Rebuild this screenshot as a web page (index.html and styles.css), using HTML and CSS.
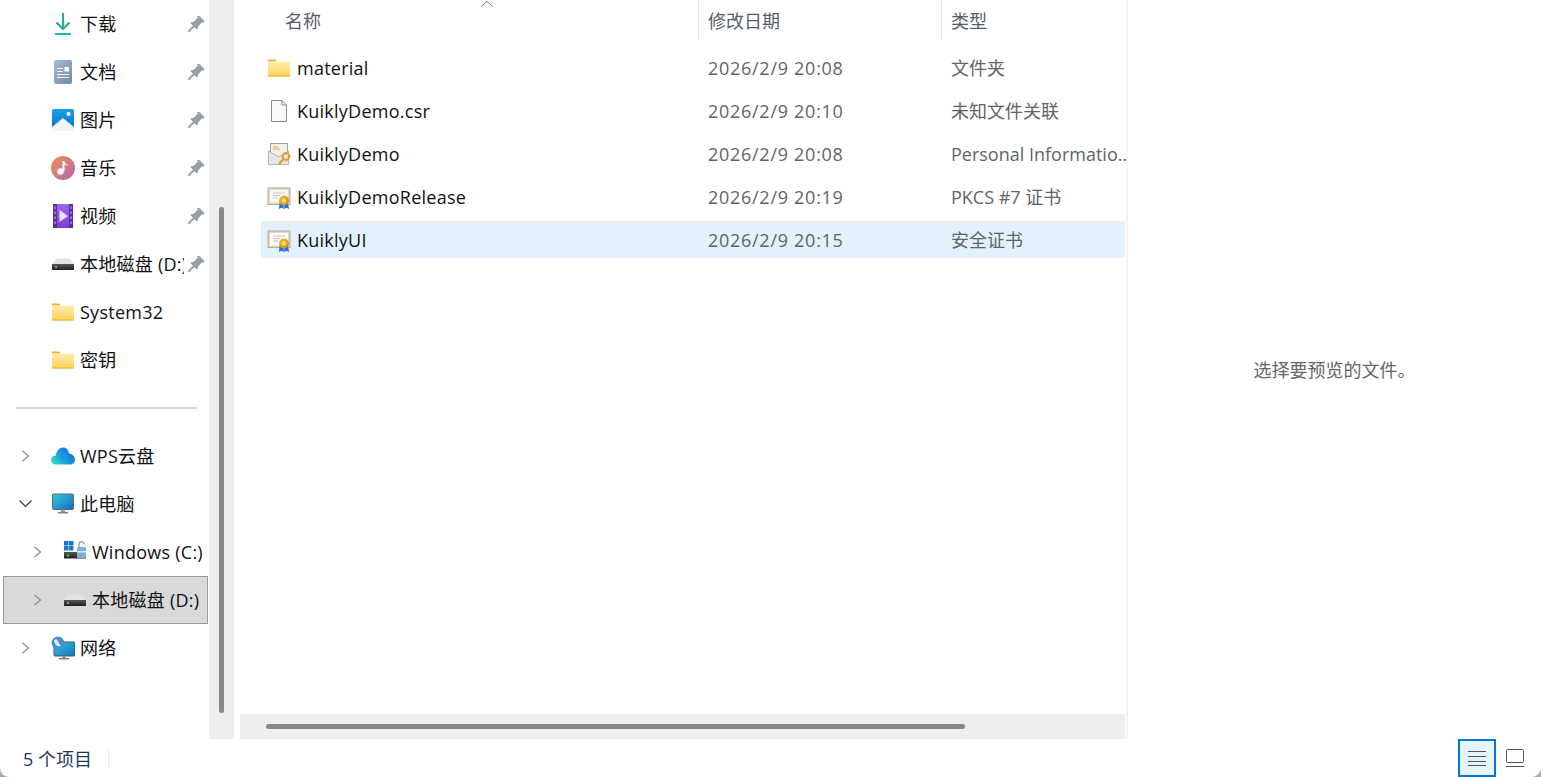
FILE: index.html
```html
<!DOCTYPE html>
<html lang="zh-CN">
<head>
<meta charset="utf-8">
<title>文件资源管理器</title>
<link rel="stylesheet" href="styles.css">
</head>
<body>
<svg class="defs" width="0" height="0" aria-hidden="true">
  <defs>
    <linearGradient id="fold" x1="0" y1="0" x2="0" y2="1"><stop offset="0" stop-color="#ffeeb0"/><stop offset="1" stop-color="#ffd055"/></linearGradient>
    <linearGradient id="doc" x1="0" y1="0" x2="1" y2="1"><stop offset="0" stop-color="#a9bdd4"/><stop offset="1" stop-color="#6f8aa8"/></linearGradient>
    <linearGradient id="pic" x1="0" y1="0" x2="0" y2="1"><stop offset="0" stop-color="#19a0e8"/><stop offset="1" stop-color="#0a6cc0"/></linearGradient>
    <linearGradient id="mus" x1="0" y1="0" x2="1" y2="1"><stop offset="0" stop-color="#f09050"/><stop offset="1" stop-color="#b068b0"/></linearGradient>
    <linearGradient id="vid" x1="0" y1="0" x2="0" y2="1"><stop offset="0" stop-color="#9a68e8"/><stop offset="1" stop-color="#7a40d0"/></linearGradient>
    <linearGradient id="cloud" x1="0" y1="1" x2="1" y2="0.4"><stop offset="0" stop-color="#3ce8c0"/><stop offset=".45" stop-color="#1ca8e0"/><stop offset="1" stop-color="#0f6cd8"/></linearGradient>
    <linearGradient id="scr" x1="0" y1="0" x2="1" y2="1"><stop offset="0" stop-color="#38c8e0"/><stop offset="1" stop-color="#1070c0"/></linearGradient>
    <linearGradient id="drv" x1="0" y1="0" x2="0" y2="1"><stop offset="0" stop-color="#555"/><stop offset="1" stop-color="#222"/></linearGradient>
    <linearGradient id="seal" x1="0" y1="0" x2="1" y2="1"><stop offset="0" stop-color="#f4c030"/><stop offset="1" stop-color="#c88a10"/></linearGradient>
    <symbol id="i-folder" viewBox="0 0 22 22">
      <path d="M0 3.500C0 3 .4 2.500 1 2.500H7L9 4.500H0Z" fill="#f2b021"/>
      <rect x="0" y="4.500" width="22" height="15" fill="url(#fold)"/>
      <rect x="0" y="18.500" width="22" height="1" fill="#eeb02e"/>
    </symbol>
    <symbol id="i-pin" viewBox="0 0 16 16">
      <g transform="translate(-1 1) rotate(45 8 8)" fill="#98a1a8">
        <rect x="3.500" y="-1.500" width="9" height="2.200" rx=".6"/>
        <rect x="4.800" y="0" width="6.400" height="7"/>
        <path d="M4.800 6.500H11.200L13.200 9.800H2.800Z"/>
        <rect x="7" y="9.500" width="2" height="8"/>
      </g>
    </symbol>
    <symbol id="i-right" viewBox="0 0 10 12">
      <path d="M1.500 1 7.500 6 1.500 11" fill="none" stroke="#8a8a8a" stroke-width="1.200"/>
    </symbol>
    <symbol id="i-disk" viewBox="0 0 22 22">
      <path d="M4.500 5.500H17.500L22 11H0Z" fill="#e0e2e4"/>
      <rect x="0" y="11" width="22" height="6" fill="url(#drv)"/>
      <rect x="3" y="13" width="2" height="2" fill="#3ed43e"/>
    </symbol>
    <symbol id="i-cert" viewBox="0 0 24 24">
      <rect x="1" y="3" width="22" height="16.500" fill="#e2d8c8" stroke="#b8aa98"/>
      <rect x="3" y="5" width="18" height="12.500" fill="#fbfaf6"/>
      <path d="M6 8H18M6 10.500H13M6 13H11" stroke="#c4c4cc" stroke-width="1"/>
      <path d="M12.500 18 12 24 14.500 22.800 16.800 24 16.500 18ZM17 18 17.300 24 19.500 22.800 22 24 21 18Z" fill="#2a72d0"/>
      <circle cx="17" cy="15.500" r="5" fill="url(#seal)"/>
      <circle cx="17" cy="15.500" r="2.300" fill="#f9dc70"/>
    </symbol>
  </defs>
</svg>

<div class="window">
  <div class="top">
    <aside class="side">
      <nav class="nav">
        <div class="row"><span class="chev"></span>
          <svg class="ic" viewBox="0 0 22 22"><path d="M11 0V16M4.500 9.500 11 16 17.500 9.500" fill="none" stroke="#1fae8e" stroke-width="2"/><path d="M3 21H19" stroke="#1fb89a" stroke-width="2"/></svg>
          <span class="label cjk">下载</span><svg class="pin"><use href="#i-pin"/></svg></div>
        <div class="row"><span class="chev"></span>
          <svg class="ic tall" viewBox="0 0 22 24"><rect x="2" y="0" width="18" height="24" rx="2" fill="url(#doc)"/><path d="M5 8.500H11M5 11.500H11M5 14.500H17M5 17.500H17" stroke="#fff" stroke-width="1"/><rect x="12.500" y="7" width="4.500" height="4.500" fill="#fff"/></svg>
          <span class="label cjk">文档</span><svg class="pin"><use href="#i-pin"/></svg></div>
        <div class="row"><span class="chev"></span>
          <svg class="ic" viewBox="0 0 22 22"><rect width="22" height="22" rx="2" fill="url(#pic)"/><circle cx="16.500" cy="5" r="2" fill="#fff"/><path d="M0 18 11 9 22 18V20.500Q22 22 20.500 22H1.500Q0 22 0 20.500Z" fill="#eef6fc"/></svg>
          <span class="label cjk">图片</span><svg class="pin"><use href="#i-pin"/></svg></div>
        <div class="row"><span class="chev"></span>
          <svg class="ic wide" viewBox="0 0 24 24"><circle cx="12" cy="12" r="12" fill="url(#mus)"/><path d="M12.500 5V15" stroke="#fff" stroke-width="2"/><path d="M12.500 5C13.500 8 17 7.500 17 10.500 16.500 9 14.500 8.500 12.500 8.500Z" fill="#fff"/><circle cx="9.500" cy="15.500" r="3.200" fill="#fff"/></svg>
          <span class="label cjk">音乐</span><svg class="pin"><use href="#i-pin"/></svg></div>
        <div class="row"><span class="chev"></span>
          <svg class="ic tall" viewBox="0 0 22 24"><rect x="1" y="0" width="20" height="24" rx="2" fill="url(#vid)"/><path d="M1 0H5V24H1ZM17 0H21V24H17Z" fill="#5a2ea0"/><path d="M2 2.500H4V5H2ZM2 7.500H4V10H2ZM2 12.500H4V15H2ZM2 17.500H4V20H2ZM18 2.500H20V5H18ZM18 7.500H20V10H18ZM18 12.500H20V15H18ZM18 17.500H20V20H18Z" fill="#9a68e8"/><path d="M7.500 6V18L16 12Z" fill="#e8e0fa"/></svg>
          <span class="label cjk">视频</span><svg class="pin"><use href="#i-pin"/></svg></div>
        <div class="row"><span class="chev"></span>
          <svg class="ic"><use href="#i-disk"/></svg>
          <span class="label cjk">本地磁盘 (D:)</span><svg class="pin"><use href="#i-pin"/></svg></div>
        <div class="row"><span class="chev"></span>
          <svg class="ic"><use href="#i-folder"/></svg>
          <span class="label">System32</span></div>
        <div class="row"><span class="chev"></span>
          <svg class="ic"><use href="#i-folder"/></svg>
          <span class="label cjk">密钥</span></div>
        <div class="divider-wrap"><div class="divider"></div></div>
        <div class="row"><span class="chev"><svg class="arrow"><use href="#i-right"/></svg></span>
          <svg class="ic wide" viewBox="0 0 24 24"><path d="M5 20.500C2 20.500 0 18.500 0 16 0 13.500 2 11.800 4.500 11.800 5.500 7 8.500 3.500 12 3.500 15.500 3.500 17.500 6 18 9.500 21.500 10 24 12.500 24 15.500 24 18.500 21.500 20.500 19 20.500Z" fill="url(#cloud)"/></svg>
          <span class="label cjk">WPS云盘</span></div>
        <div class="row"><span class="chev"><svg class="arrow down" viewBox="0 0 13 8"><path d="M.5 .5 6.500 6.500 12.500 .5" fill="none" stroke="#333" stroke-width="1.200"/></svg></span>
          <svg class="ic" viewBox="0 0 22 22"><rect x=".5" y="1" width="21" height="15.500" rx="1" fill="url(#scr)" stroke="#5a6a78"/><rect x="9" y="16.500" width="4" height="3" fill="#8a949c"/><rect x="6" y="19" width="10" height="1.500" fill="#7a848c"/></svg>
          <span class="label cjk">此电脑</span></div>
        <div class="row sub"><span class="chev"><svg class="arrow"><use href="#i-right"/></svg></span>
          <svg class="ic" viewBox="0 0 22 22"><path d="M0 0H4.500V4.500H0ZM5 0H9.500V4.500H5ZM0 5H4.500V9.500H0ZM5 5H9.500V9.500H5Z" fill="#1878d0"/><rect x="0" y="11" width="22" height="6.500" fill="url(#drv)"/><rect x="3" y="13.500" width="2" height="2" fill="#3ed43e"/><path d="M15 7V3.500Q15 .8 17.500 .8T20 3.500" fill="none" stroke="#9ab" stroke-width="1.500"/><rect x="13" y="6" width="9" height="11" rx="1" fill="#7eb0d8"/><rect x="13" y="10" width="9" height="1.500" fill="#d8e6f0"/></svg>
          <span class="label">Windows (C:)</span></div>
        <div class="row sub selected"><span class="chev"><svg class="arrow"><use href="#i-right"/></svg></span>
          <svg class="ic"><use href="#i-disk"/></svg>
          <span class="label cjk">本地磁盘 (D:)</span></div>
        <div class="row"><span class="chev"><svg class="arrow"><use href="#i-right"/></svg></span>
          <svg class="ic wide" viewBox="0 0 24 24"><rect x="3" y="6" width="21" height="14" rx="1" fill="url(#scr)" stroke="#456"/><rect x="11" y="20" width="4" height="2" fill="#8a949c"/><rect x="8" y="22" width="10" height="1.500" fill="#7a848c"/><circle cx="7" cy="7" r="6.500" fill="#4a90d0"/><path d="M3 4Q6 2 7 5T10 10Q6 11 4 8Z" fill="#d8e8f4"/></svg>
          <span class="label cjk">网络</span></div>
      </nav>
      <div class="vtrack"><div class="vthumb"></div></div>
    </aside>

    <main class="main">
      <div class="list">
        <div class="head">
          <div class="col name hcell">名称<svg class="sort" viewBox="0 0 14 6"><path d="M1 5.500 7 .5 13 5.500" fill="none" stroke="#777" stroke-width="1"/></svg></div>
          <div class="col date hcell sep">修改日期</div>
          <div class="col type hcell sep">类型</div>
        </div>
        <div class="file">
          <div class="col name"><svg class="fic folder"><use href="#i-folder"/></svg><span class="fname">material</span></div>
          <div class="col date">2026/2/9 20:08</div><div class="col type cjk">文件夹</div>
        </div>
        <div class="file">
          <div class="col name"><svg class="fic" viewBox="0 0 24 24"><path d="M4.500 1.500H15L19.500 6V22.500H4.500Z" fill="#fafafa" stroke="#8a8a8a"/><path d="M15 1.500V6H19.500" fill="none" stroke="#8a8a8a"/></svg><span class="fname">KuiklyDemo.csr</span></div>
          <div class="col date">2026/2/9 20:10</div><div class="col type cjk">未知文件关联</div>
        </div>
        <div class="file">
          <div class="col name"><svg class="fic" viewBox="0 0 24 24"><rect x="3.500" y="1.500" width="17" height="14" fill="#f4f0e8" stroke="#a8a098"/><path d="M1.500 9 11.500 15 21.500 9V22.500H1.500Z" fill="#e6e6e6" stroke="#b4b4b4"/><path d="M6 7H13M6 5H11" stroke="#e0b050"/><circle cx="19" cy="14.500" r="3.300" fill="none" stroke="#e0a030" stroke-width="2.200"/><path d="M16.500 17 12 22" stroke="#e0a030" stroke-width="2.500"/></svg><span class="fname">KuiklyDemo</span></div>
          <div class="col date">2026/2/9 20:08</div><div class="col type">Personal Informatio..</div>
        </div>
        <div class="file">
          <div class="col name"><svg class="fic"><use href="#i-cert"/></svg><span class="fname">KuiklyDemoRelease</span></div>
          <div class="col date">2026/2/9 20:19</div><div class="col type cjk">PKCS #7 证书</div>
        </div>
        <div class="file active">
          <div class="col name"><svg class="fic"><use href="#i-cert"/></svg><span class="fname">KuiklyUI</span></div>
          <div class="col date">2026/2/9 20:15</div><div class="col type cjk">安全证书</div>
        </div>
      </div>
      <div class="htrack"><div class="hthumb"></div></div>
    </main>

    <div class="splitter"></div>
    <section class="preview cjk">选择要预览的文件。</section>
  </div>

  <footer class="status">
    <span class="count">5 个项目</span>
    <span class="vline"></span>
    <span class="views">
      <span class="vbtn on"><svg viewBox="0 0 18 16" width="18" height="16"><path d="M0 1.500H18M0 6.500H18M0 11.500H18M0 15.500H18" stroke="#555" stroke-width="1"/></svg></span>
      <span class="vbtn"><svg viewBox="0 0 18 18" width="18" height="18"><rect x=".5" y=".5" width="17" height="13" rx="1" fill="none" stroke="#555"/><path d="M0 17.500H18" stroke="#555"/></svg></span>
    </span>
  </footer>
</div>
</body>
</html>
```

FILE: styles.css
```css
* { box-sizing: border-box; }
html, body { margin: 0; height: 100%; overflow: hidden; }
body {
  background: #a8a8a8;
  font-family: "Open Sans", "Noto Sans CJK SC", sans-serif;
  font-size: 18px;
  color: #111;
}
.defs { position: absolute; }
.window {
  display: flex;
  flex-direction: column;
  width: 1541px;
  height: 777px;
  background: #fff;
  border-radius: 0 0 9px 9px;
  overflow: hidden;
}
.top { display: flex; height: 739px; }
.cjk { padding-bottom: 2px; }

/* sidebar */
.side { display: flex; width: 240px; flex: none; }
.nav { width: 209px; flex: none; }
.row {
  display: flex;
  align-items: center;
  width: 205px;
  height: 48px;
  margin-left: 3px;
  padding-left: 13px;
  letter-spacing: .25px;
}
.row.sub { padding-left: 25px; }
.row.selected { background: #d9d9d9; border: 1px solid #9a9a9a; padding-left: 24px; }
.chev { width: 36px; flex: none; display: flex; align-items: center; }
.arrow { width: 10px; height: 12px; margin-left: 5px; }
.arrow.down { width: 13px; height: 8px; margin-left: 3px; }
.ic { width: 22px; height: 22px; flex: none; margin-right: 6px; }
.ic.tall { height: 24px; }
.ic.wide { width: 24px; height: 24px; margin-left: -1px; margin-right: 5px; }
.label { flex: 1; min-width: 0; white-space: nowrap; overflow: hidden; }
.pin { width: 16px; height: 16px; flex: none; margin: 0 4px; }
.divider-wrap { height: 48px; display: flex; align-items: center; padding: 0 12px 0 16px; }
.divider { height: 2px; width: 181px; background: #d6d6d6; }
.vtrack { width: 25px; height: 739px; background: #eee; padding: 207px 10px 0; }
.vthumb { width: 5px; height: 506px; background: #888; border-radius: 3px; }

/* list */
.main { width: 885px; flex: none; display: flex; flex-direction: column; }
.list { flex: 1; }
.head { display: flex; height: 40px; margin-bottom: 9px; margin-left: 21px; }
.col { display: flex; align-items: center; flex: none; white-space: nowrap; }
.name { width: 437px; padding-left: 7px; letter-spacing: .25px; }
.date { width: 243px; padding-left: 10px; color: #5f6468; letter-spacing: .72px; }
.type { width: 184px; padding-left: 10px; color: #5f6468; }
.hcell { color: #56606c; position: relative; letter-spacing: 0; }
.head .name { padding-left: 24px; }
.head .sep { padding-left: 9px; border-left: 1px solid #e6e6e6; }
.sort { position: absolute; left: 219px; top: 1px; width: 14px; height: 6px; }
.file { display: flex; height: 37px; margin: 0 0 6px 21px; border-radius: 2px; }
.file.active { background: #e2f1fc; }
.fic { width: 24px; height: 24px; flex: none; margin-right: 6px; margin-left: -1px; }
.fic.folder { width: 22px; height: 22px; margin-left: 0; margin-right: 7px; }
.fname { color: #111; }
.htrack { height: 25px; background: #eee; padding: 10px 0 0 26px; }
.hthumb { width: 699px; height: 5px; background: #888; border-radius: 3px; }

.splitter { width: 2px; margin-left: 1px; background: #f3f3f3; flex: none; }
.preview {
  flex: 1;
  display: flex;
  align-items: center;
  justify-content: center;
  color: #666;
}

/* status */
.status { display: flex; align-items: center; height: 38px; padding-left: 23px; }
.count { color: #1f3a5a; }
.vline { width: 1px; height: 20px; background: #ececec; margin-left: 16px; }
.views { margin-left: auto; display: flex; margin-right: 7px; }
.vbtn { width: 38px; height: 38px; display: flex; align-items: center; justify-content: center; }
.vbtn.on { background: #e5f3fb; border: 2px solid #0078d4; }
```
